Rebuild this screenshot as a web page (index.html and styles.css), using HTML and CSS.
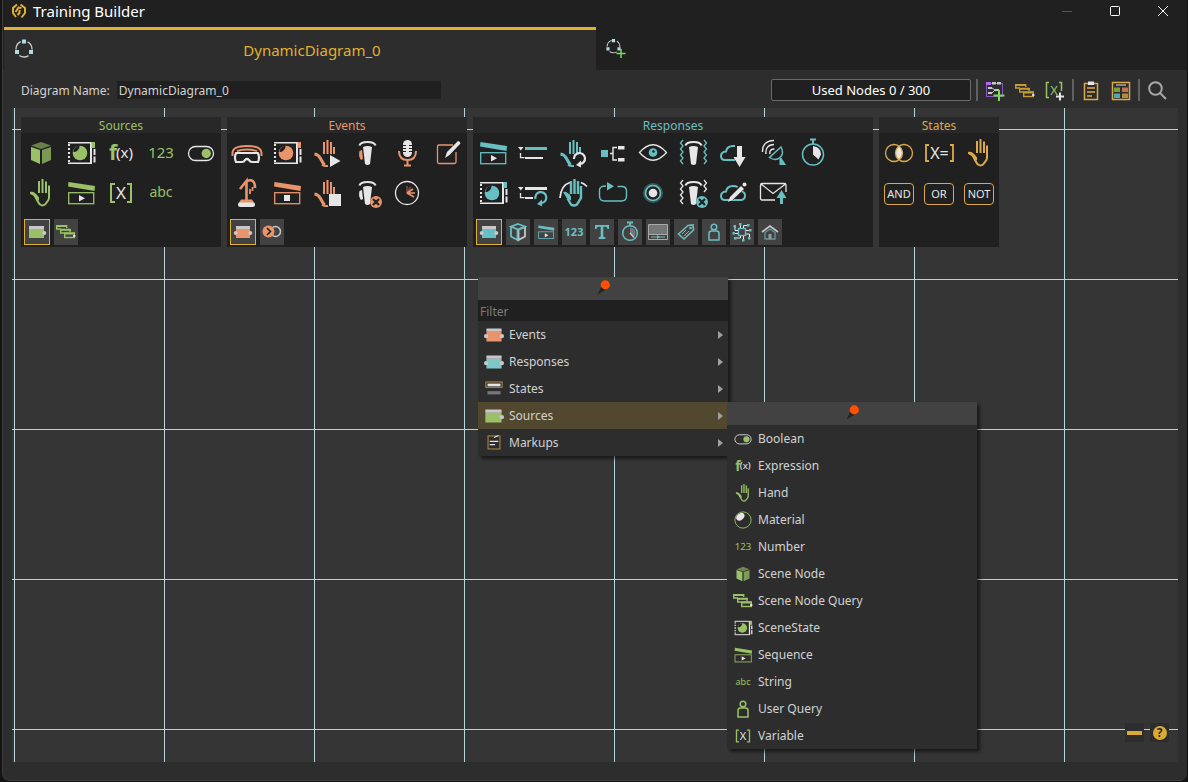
FILE: index.html
```html
<!DOCTYPE html>
<html lang="en">
<head>
  <meta charset="UTF-8">
  <meta name="viewport" content="width=device-width, initial-scale=1.0">
  <title>Training Builder</title>
  <link rel="stylesheet" href="styles.css">
</head>
<body>
  <!-- Icon sprite: currentColor is the group colour, .w / .ws are the light parts -->
  <svg class="sprite" aria-hidden="true">
    <symbol id="cube" viewBox="0 0 40 40">
      <path class="f" opacity=".6" d="M20 9l10 3.500-10 3.500-10-3.500z"/>
      <path class="f" d="M10 14l9 3v14l-9-4z"/>
      <path class="f" opacity=".75" d="M30 14l-9 3v14l9-4z"/>
    </symbol>
    <symbol id="scene" viewBox="0 0 40 40">
      <path class="ws" stroke-width="1.500" d="M7 9.700h22M7 30.300h22"/>
      <path class="ws" stroke-width="2" stroke-dasharray="2 2" d="M8 11v19"/>
      <path class="ws" stroke-width="2" d="M30 9v22"/>
      <path class="ws" stroke-width="2" stroke-dasharray="6 1.500" d="M33.500 16v15"/>
      <path class="f" d="M30.500 9H34v6h-3.500z"/>
      <circle class="f" cx="19" cy="20" r="7.300"/>
      <path class="dark" d="M12.500 19c0-3.500 2.500-6 6-6.300.3 3-2.500 6.500-6 6.300z"/>
    </symbol>
    <symbol id="fx" viewBox="0 0 40 40">
      <text class="f bold" x="8" y="27" font-size="21">f</text>
      <text class="w" x="15" y="25" font-size="15">(x)</text>
    </symbol>
    <symbol id="num" viewBox="0 0 40 40">
      <text class="f" x="20" y="25" font-size="15" text-anchor="middle">123</text>
    </symbol>
    <symbol id="toggle" viewBox="0 0 40 40">
      <rect class="ws" stroke-width="1.300" x="7.500" y="13.500" width="25" height="14" rx="7"/>
      <circle class="f" cx="25.300" cy="20.500" r="4.700"/>
    </symbol>
    <symbol id="hand" viewBox="0 0 40 40">
      <path class="s" stroke-width="2" d="M18 8v12M21.500 6v14M25 8.500V20M28 12.500V25q0 2-2 4l-2 2.500q-2.500 1.800-5 0c-2-2-3.500-5.500-5-8.500-1-1.500-2.500-2-4.500-3"/>
      <path class="f" d="M9 19c3-1 6 1 9 5.500v3l-3-1c-1-2.500-3-5.500-6-6z"/>
    </symbol>
    <symbol id="fingers" viewBox="0 0 40 40">
      <path class="s" stroke-width="2" d="M17 9v12M20.500 7v14M24 9v12M27 14v7"/>
      <path class="s" stroke-width="3" d="M7.500 21q4 .5 6 4.500t4 6.500"/>
      <path class="s" stroke-width="2" d="M15 31.500q2 2 6 1.500"/>
    </symbol>
    <symbol id="clap" viewBox="0 0 40 40">
      <path class="f" d="M7.500 9L34 13l-.500 5L7 13.500z"/>
      <rect class="s" stroke-width="1.300" x="7.700" y="19.700" width="25" height="11"/>
    </symbol>
    <symbol id="sequence" viewBox="0 0 40 40">
      <use href="#clap"/>
      <path class="w" d="M18 22l6 3.300-6 3.300z"/>
    </symbol>
    <symbol id="seqstop" viewBox="0 0 40 40">
      <use href="#clap"/>
      <path class="w" d="M17 22h6v6h-6z"/>
    </symbol>
    <symbol id="variable" viewBox="0 0 40 40">
      <path class="s" stroke-width="2" d="M14 11h-4v18h4M26 11h4v18h-4"/>
      <text class="w" x="20" y="26" font-size="17" text-anchor="middle">X</text>
    </symbol>
    <symbol id="abc" viewBox="0 0 40 40">
      <text class="f" x="20" y="24" font-size="14" text-anchor="middle">abc</text>
    </symbol>
    <symbol id="stack" viewBox="0 0 24 24">
      <path class="s" stroke-width="1.400" d="M7 9H2.700V5.700h10V8M10 13H6.700V9.500H16V12"/>
      <path class="f" d="M2 5h11v2H2zM6 9h11v1.800H6zM10 12.500h11v2H10z"/>
      <rect class="s" stroke-width="1.400" x="10.700" y="13" width="9.600" height="4.500"/>
      <circle class="w" cx="20.300" cy="16" r="1.200"/>
    </symbol>
    <symbol id="node-out" viewBox="0 0 24 24">
      <path class="f" d="M4 9h15v9H4z"/>
      <path class="g" d="M4 6h15v3H4z"/>
      <circle class="g" cx="19.300" cy="13" r="2"/>
    </symbol>
    <symbol id="node" viewBox="0 0 24 24">
      <path class="f" d="M5 9h14v9H5z"/>
      <path class="g" d="M5 6h14v3H5z"/>
      <circle class="g" cx="19.300" cy="13" r="2"/>
      <circle class="g" cx="4.700" cy="13" r="2"/>
    </symbol>

    <symbol id="vr" viewBox="0 0 40 40">
      <path class="s" stroke-width="2" d="M5.500 23v-3q0-7 14.500-7t14.500 7v3M10 18q10-3 20 0"/>
      <path class="ws" stroke-width="2.200" stroke-linejoin="round" d="M9 20h22q2 5 0 9h-6q-2 0-3-2-2-2-4 0-1 2-3 2H9q-2-4 0-9z"/>
    </symbol>
    <symbol id="handplay" viewBox="0 0 40 40">
      <use href="#fingers"/>
      <path class="w" d="M23 22l10.500 6L23 34z"/>
    </symbol>
    <symbol id="handstop" viewBox="0 0 40 40">
      <use href="#fingers"/>
      <path class="w" d="M22 21h12v12H22z"/>
    </symbol>
    <symbol id="wand" viewBox="0 0 40 40">
      <path class="ws" stroke-width="2.200" d="M12.500 12.500q1-3.500 8-3.500t8 3.500"/>
      <path class="w" d="M16 14q4.500-2 9 0l-2 17q-2.500 2-5 0z"/>
    </symbol>
    <symbol id="grab" viewBox="0 0 40 40">
      <use href="#wand"/>
      <path class="f" d="M12.500 18l2.500-1 1 9-2 1q-3-4-1.500-9z"/>
    </symbol>
    <symbol id="cross" viewBox="0 0 40 40">
      <circle class="f" cx="29" cy="29" r="6"/>
      <path class="ds" stroke-width="2.200" d="M26 26l6 6M32 26l-6 6"/>
    </symbol>
    <symbol id="grabx" viewBox="0 0 40 40">
      <use href="#wand"/>
      <path class="w" d="M12.500 18l2.500-1 1 9-2 1q-3-4-1.500-9z"/>
      <use href="#cross"/>
    </symbol>
    <symbol id="mic" viewBox="0 0 40 40">
      <rect class="w" x="16" y="7" width="9" height="17" rx="4.500"/>
      <path class="ds" stroke-width="1" d="M15 12.500h4M15 15.500h4M15 18.500h4M26 12.500h-4M26 15.500h-4M26 18.500h-4"/>
      <path class="s" stroke-width="2" d="M12 18q0 9 8.500 9T29 18M20.500 27v5M17 32.500h7"/>
    </symbol>
    <symbol id="edit" viewBox="0 0 40 40">
      <path class="s" stroke-width="1.300" d="M26 12H12q-1.500 0-1.500 1.500v15.500q0 1.500 1.500 1.500h15.500q1.500 0 1.500-1.500V19"/>
      <path class="w" d="M18 25l2-6L31 8q2 0 2.500 2.500L22.500 22z"/>
    </symbol>
    <symbol id="touch" viewBox="0 0 40 40">
      <path class="s" stroke-width="2.600" d="M19.500 27V8L13 16M20 8q8-3 8 7"/>
      <path class="s" stroke-width="1.800" d="M23 16v5M25.500 14v4"/>
      <rect class="w" x="11" y="29" width="17" height="5" rx="2.500"/>
      <path class="f" d="M14 26.500h11l2 3H12z"/>
    </symbol>
    <symbol id="gauge" viewBox="0 0 40 40">
      <circle class="ws" stroke-width="1.300" cx="20" cy="20" r="11.500"/>
      <path class="s" stroke-width="1.600" d="M20 20h8M20 20l7 4M20 20l6-4"/>
      <path class="s" opacity=".4" stroke-width="1.600" d="M20 20v-7M20 20l3.500-6"/>
    </symbol>
    <symbol id="shift" viewBox="0 0 24 24">
      <circle class="gs" stroke-width="1.500" cx="15.500" cy="11.500" r="5"/>
      <circle class="f" cx="8.500" cy="11.500" r="6"/>
      <path class="ds" stroke-width="1.600" d="M7 8l3.500 3.500L7 15"/>
    </symbol>

    <symbol id="list" viewBox="0 0 40 40">
      <path class="w" d="M5 14h5.500l-2.700 3.500z"/>
      <path class="ws" stroke-width="1.300" d="M7.500 20v4.700h4"/>
      <path class="f" d="M12 14h22v3H12z"/>
      <path class="w" d="M12 24h18v2H12z"/>
    </symbol>
    <symbol id="listredo" viewBox="0 0 40 40">
      <path class="w" d="M5 14h5.500l-2.700 3.500zM12 14h22v3H12zM12 24h8v2h-8z"/>
      <path class="ws" stroke-width="1.300" d="M7.500 20v4.700h4"/>
      <path class="s" stroke-width="2.200" d="M22.500 26a5.500 5.500 0 1 1 6 4"/>
      <path class="f" d="M29 26.500v7l-5-2.500z"/>
    </symbol>
    <symbol id="handredo" viewBox="0 0 40 40">
      <use href="#fingers"/>
      <path class="ws" stroke-width="2.200" d="M21 26a5.500 5.500 0 1 1 6 5"/>
      <path class="w" d="M28 27.500v7L23 32z"/>
    </symbol>
    <symbol id="tree" viewBox="0 0 40 40">
      <path class="f" d="M8 17h7v7H8z"/>
      <path class="ws" stroke-width="1.400" d="M17 20.500h3M24 14.500h-4v12.500h4"/>
      <path class="w" d="M25 13h6.500v3.500H25zM25 25h6.500v3.500H25z"/>
    </symbol>
    <symbol id="eye" viewBox="0 0 40 40">
      <path class="ws" stroke-width="1.300" d="M6.500 19.500Q20 4 33.500 19.500 20 35 6.500 19.500z"/>
      <circle class="f" cx="20" cy="19.500" r="4.300"/>
      <circle class="dark" cx="20.500" cy="18.500" r="1.300"/>
    </symbol>
    <symbol id="haptic" viewBox="0 0 40 40">
      <use href="#wand"/>
      <path class="s" stroke-width="1.300" d="M10 7l-2.500 3 2.500 3-2.500 3 2.500 3-2.500 3 2.500 3-2.500 3 2.500 3M31 7l2.500 3-2.500 3 2.500 3-2.500 3 2.500 3-2.500 3 2.500 3-2.500 3"/>
    </symbol>
    <symbol id="hapticx" viewBox="0 0 40 40">
      <use href="#wand"/>
      <path class="ws" stroke-width="1.300" d="M10 7l-2.500 3 2.500 3-2.500 3 2.500 3-2.500 3 2.500 3-2.500 3 2.500 3M31 7l2.500 3-2.500 3 2.500 3-2.500 3"/>
      <use href="#cross"/>
    </symbol>
    <symbol id="cloud" viewBox="0 0 40 40">
      <path class="s" stroke-width="2" d="M12 27q-4 0-4-4t5-4.500q1-5.500 7-5.500t7 5q5 .5 5 4.500t-4 4.500z"/>
    </symbol>
    <symbol id="cloudload" viewBox="0 0 40 40">
      <path class="s" stroke-width="2" d="M22 27H12q-4 0-4-4t5-4.500q1-5.500 7-5.500h2"/>
      <path class="w" d="M24 13h5v11h3.500L26.500 34l-6-10H24z"/>
    </symbol>
    <symbol id="cloudedit" viewBox="0 0 40 40">
      <use href="#cloud"/>
      <path class="ds" stroke-width="6" d="M18 25L31 12"/>
      <path class="w" d="M15 29l2-5L28 13l3 3-11 10.500z"/>
      <circle class="w" cx="31.500" cy="11.500" r="2"/>
    </symbol>
    <symbol id="dish" viewBox="0 0 40 40">
      <path class="ws" stroke-width="1.400" d="M9.500 19Q9 8 21 7.500M13 21q-1-9 8-9.500M17 21q-1-5 4.500-5"/>
      <path class="s" stroke-width="1.500" d="M28 14L16.500 24.500q6 4 10.500 0t1-10.500z"/>
      <path class="f" d="M26.500 25h2L33 32h-6.500z"/>
    </symbol>
    <symbol id="timer" viewBox="0 0 40 40">
      <circle class="s" stroke-width="1.500" cx="20" cy="21.500" r="10.500"/>
      <path class="s" stroke-width="2" d="M17 6.500h6M20 6.500V11"/>
      <path class="w" d="M20 13q8 1 8 8.500l-2.500 5L20 21.500z"/>
    </symbol>
    <symbol id="timer-s" viewBox="0 0 24 24">
      <circle class="s" stroke-width="1.500" cx="12" cy="13" r="7.300"/>
      <path class="s" stroke-width="1.800" d="M9 2.500h6M12 2.500V6"/>
      <path fill="#777" d="M12 7.500q5.500.500 5.500 6L16 17l-4-4z"/>
      <path class="gs" stroke-width="1.500" d="M12 13l4 4.500"/>
    </symbol>
    <symbol id="handarc" viewBox="0 0 40 40">
      <path class="ws" stroke-width="1.700" d="M7 25Q8 12 17 9.500M28 9.500q3 1 6 4"/>
      <path class="s" stroke-width="2.400" d="M18 8v13M21.500 6v15M25 8v13M28 13v12l-4 6.500q-3 2-6 0l-3.500-6"/>
      <path class="f" d="M10 19q4-1 8 4.500v4l-4-2z"/>
    </symbol>
    <symbol id="loop" viewBox="0 0 40 40">
      <path class="s" stroke-width="1.400" d="M13 13q-6.500 0-6.500 4v6q0 5 5 5h17q5 0 5-5v-5q0-4-4-4.500h-5"/>
      <path class="f" d="M14 9l7 4.300-7 4.200z"/>
    </symbol>
    <symbol id="target" viewBox="0 0 40 40">
      <circle class="f" opacity=".35" cx="20" cy="20" r="10"/>
      <circle class="dark" cx="20" cy="20" r="6.800"/>
      <circle class="s" stroke-width="1.600" cx="20" cy="20" r="7.500"/>
      <circle class="w" cx="20" cy="20" r="4.300"/>
    </symbol>
    <symbol id="mail" viewBox="0 0 40 40">
      <path class="ws" stroke-width="1.300" d="M22 27H9q-1.500 0-1.500-1.500V12q0-1.500 1.500-1.500h22.500q1.500 0 1.500 1.500v7M8 11l12 9.500L32.500 11"/>
      <path class="f" d="M28.500 17l5 8h-3.500v6h-3v-6h-3.500z"/>
    </symbol>

    <symbol id="box" viewBox="0 0 24 24">
      <path class="gs" stroke-width="1.800" d="M12.500 9.500L19 7v9.500l-6.500 3.500z"/>
      <path class="s" stroke-width="1.800" d="M12 4l7 2.500-7 3-7-3zM5 7v9.500l6.500 3.500V9.500"/>
    </symbol>
    <symbol id="num-s" viewBox="0 0 24 24">
      <text class="f bold" x="12" y="16" font-size="11" text-anchor="middle">123</text>
    </symbol>
    <symbol id="type" viewBox="0 0 24 24">
      <path class="f" d="M5 5h14v4h-1.500q0-2.300-2.500-2.300h-1.700v9.600q0 1 2 1V19H8.700v-1.700q2 0 2-1V6.700H9Q6.500 6.700 6.500 9H5z"/>
    </symbol>
    <symbol id="panel" viewBox="0 0 24 24">
      <path fill="#777" stroke="#aaa" d="M2.500 4.500h19v10h-19z"/>
      <path stroke="#aaa" d="M2.500 14.500h19v5h-19z"/>
      <path class="s" stroke-width="1" d="M5 17h14"/>
      <path class="f" d="M11 15l3 2-3 2z"/>
    </symbol>
    <symbol id="tag" viewBox="0 0 24 24">
      <path class="s" stroke-width="1.600" d="M4.500 14L14 5.500l5-.500.500 5L10 19z"/>
      <path class="s" stroke-width="1" d="M8 14l4-4M10 16l5-5"/>
      <circle class="f" cx="16.500" cy="8" r="1.300"/>
    </symbol>
    <symbol id="person" viewBox="0 0 24 24">
      <circle class="s" stroke-width="1.500" cx="12" cy="7" r="2.800"/>
      <path class="s" stroke-width="1.500" d="M7 20v-6.500q0-2.500 2.500-2.500h5q2.500 0 2.500 2.500V20z"/>
    </symbol>
    <symbol id="chip" viewBox="0 0 24 24">
      <rect class="s" stroke-width="1.400" x="8.500" y="8.500" width="7" height="7"/>
      <path class="ws" stroke-width="1" d="M10.500 8V4M13.500 8V5.500H18M16 10.500h4M16 14h3.500v3M13.500 16v4M10.500 16v2H6M8 13.500H4M8 10.500H5V7"/>
      <path class="f" d="M9 3h2.500v2.500H9zM17 4h2.500v2.500H17zM19 9h2.500v2.500H19zM18 17h2.500v2.500H18zM12 19h2.500v2.500H12zM4 17h2.500v2.500H4zM2.500 12H5v2.500H2.500zM3.500 5H6v2.500H3.500z"/>
    </symbol>
    <symbol id="home" viewBox="0 0 24 24">
      <path class="gs" stroke-width="1.600" d="M4 12l8-6 8 6"/>
      <path class="s" opacity=".7" stroke-width="1.300" d="M7 12.500V19h10v-6.500L12 9z"/>
      <path fill="#999" d="M10.500 14h3v5h-3z"/>
    </symbol>

    <symbol id="venn" viewBox="0 0 40 40">
      <path class="w" d="M20 13q7 7 0 14-7-7 0-14z"/>
      <circle class="s" stroke-width="1.300" cx="15" cy="20" r="8.500"/>
      <circle class="s" stroke-width="1.300" cx="25" cy="20" r="8.500"/>
    </symbol>
    <symbol id="xeq" viewBox="0 0 40 40">
      <path class="s" stroke-width="1.800" d="M10 12H7v16h3M31 12h3v16h-3"/>
      <text class="w" x="20.500" y="26" font-size="16" text-anchor="middle">X=</text>
    </symbol>

    <symbol id="state" viewBox="0 0 24 24">
      <rect x="4.500" y="5.500" width="15" height="5" fill="none" stroke="#a9843c"/>
      <path class="w" d="M6 7h12v2.500H6z"/>
      <path fill="#777" d="M6 14h12v3H6z"/>
    </symbol>
    <symbol id="markup" viewBox="0 0 24 24">
      <rect x="6.500" y="5.500" width="11" height="12" fill="none" stroke="#a9843c"/>
      <path class="ws" stroke-width="1" d="M8 10.500h8M8 13.500h5M12 7l4-2"/>
    </symbol>
    <symbol id="ball" viewBox="0 0 40 40">
      <circle class="s" stroke-width="1.400" cx="20" cy="20" r="12.500"/>
      <ellipse class="w" cx="16" cy="15" rx="7" ry="5" transform="rotate(-40 16 15)"/>
    </symbol>
    <symbol id="pin" viewBox="0 0 24 24">
      <path fill="#222" d="M6 18l5-10 5 4z"/>
      <circle cx="14.500" cy="7.500" r="5" fill="#ff4f00"/>
    </symbol>
    <symbol id="ring" viewBox="0 0 24 24">
      <circle cx="12" cy="12" r="8" stroke="#c8c8c8" stroke-width="1.300" stroke-dasharray="9.750 7" stroke-dashoffset="-7.700"/>
      <path fill="#b5dbe2" d="M10 2.500h4v4h-4zM3 13h4v4H3zM17 13h4v4h-4z"/>
    </symbol>
  </svg>

  <div class="window">
    <header class="titlebar">
      <svg class="logo" viewBox="0 0 16 16" aria-hidden="true">
        <path d="M6 1.500L2 5v5l3 4M9.500 1.500L14 5v5l-3.500 4.500M4.500 9l3-4.500 3 .500M8.500 7v3l-2 2"/>
      </svg>
      <h1>Training Builder</h1>
      <div class="win-buttons">
        <button aria-label="Minimize" disabled><svg viewBox="0 0 12 12"><path d="M1 6.500h10"/></svg></button>
        <button aria-label="Maximize"><svg viewBox="0 0 12 12"><rect x="1.500" y="1.500" width="9" height="9" rx="1"/></svg></button>
        <button aria-label="Close"><svg viewBox="0 0 12 12"><path d="M1 1l10 10M11 1L1 11"/></svg></button>
      </div>
    </header>

    <nav class="tabs">
      <button class="tab">
        <svg><use href="#ring"/></svg>
        <span>DynamicDiagram_0</span>
      </button>
      <button class="tab-add" aria-label="Add diagram">
        <svg viewBox="0 0 24 24">
          <use href="#ring" width="19" height="19"/>
          <path stroke="#7ed957" stroke-width="1.500" d="M17 12v9M12.500 16.500h9"/>
        </svg>
      </button>
    </nav>

    <div class="toolbar">
      <label for="name">Diagram Name:</label>
      <input type="text" id="name" value="DynamicDiagram_0">
      <div class="used">Used Nodes 0 / 300</div>
      <div class="actions">
        <button aria-label="Add group">
          <svg viewBox="0 0 24 24">
            <rect x="3.500" y="4.500" width="16" height="13" fill="none" stroke="#8d55c7"/>
            <path fill="#b06cf0" d="M3 3h5v3H3z"/>
            <path fill="#c8c8c8" d="M9 3h4v2.500H9zM14 3h4v2.500h-4zM5 8h4v2H5zM5 13h4v2H5zM12 10h4v2h-4z"/>
            <path stroke="#c8c8c8" d="M9 9l3 2-3 3"/>
            <path stroke="#7ed957" stroke-width="2" d="M16 11v11M10.500 16.500h11"/>
          </svg>
        </button>
        <button class="gold" aria-label="Node query"><svg><use href="#stack"/></svg></button>
        <button class="green" aria-label="Add variable">
          <svg viewBox="0 0 24 24">
            <path class="s" stroke-width="1.500" d="M6 3.500H3.500v15H6M16 3.500h2.500V12"/>
            <text class="f" x="11" y="16" font-size="13" text-anchor="middle">X</text>
            <path class="ws" stroke-width="2" d="M17 13.500v8M13 17.500h8"/>
          </svg>
        </button>
      </div>
      <div class="actions">
        <button class="states" aria-label="Clipboard">
          <svg viewBox="0 0 24 24">
            <rect class="s" stroke-width="1.500" x="5.500" y="4.500" width="13" height="16"/>
            <path class="s" stroke-width="1.500" d="M8 9h8M8 13h8M8 17h5"/>
            <path class="w" d="M9 2.500h6V6H9z"/>
          </svg>
        </button>
        <button class="states" aria-label="Palette">
          <svg viewBox="0 0 24 24">
            <rect class="s" stroke-width="1.500" x="3.500" y="3.500" width="17" height="17"/>
            <path class="ws" d="M7 6h10"/>
            <path fill="#7f9d3c" d="M5 8.500h6V13H5z"/>
            <path fill="#c5714e" d="M13 8.500h6V13h-6z"/>
            <path fill="#4fa9ac" d="M5 14.500h6V19H5z"/>
            <path fill="#b78a34" d="M13 14.500h6V19h-6z"/>
          </svg>
        </button>
      </div>
      <div class="actions">
        <button aria-label="Search">
          <svg viewBox="0 0 24 24"><circle class="find" cx="10.500" cy="9.500" r="6.300"/><path class="find" d="M15 14l6 6"/></svg>
        </button>
      </div>
    </div>

    <main class="canvas">
      <div class="palettes">
        <section class="palette sources">
          <h2>Sources</h2>
          <div class="tools cols-5">
            <button aria-label="Scene node"><svg><use href="#cube"/></svg></button>
            <button aria-label="Scene state"><svg><use href="#scene"/></svg></button>
            <button aria-label="Expression"><svg><use href="#fx"/></svg></button>
            <button aria-label="Number"><svg><use href="#num"/></svg></button>
            <button aria-label="Boolean"><svg><use href="#toggle"/></svg></button>
            <button aria-label="Hand"><svg><use href="#hand"/></svg></button>
            <button aria-label="Sequence"><svg><use href="#sequence"/></svg></button>
            <button aria-label="Variable"><svg><use href="#variable"/></svg></button>
            <button aria-label="String"><svg><use href="#abc"/></svg></button>
          </div>
          <div class="filters">
            <button class="active" aria-label="All"><svg><use href="#node-out"/></svg></button>
            <button aria-label="Query"><svg><use href="#stack"/></svg></button>
          </div>
        </section>

        <section class="palette events">
          <h2>Events</h2>
          <div class="tools cols-6">
            <button aria-label="Headset"><svg><use href="#vr"/></svg></button>
            <button aria-label="Scene state"><svg><use href="#scene"/></svg></button>
            <button aria-label="Hand start"><svg><use href="#handplay"/></svg></button>
            <button aria-label="Grab"><svg><use href="#grab"/></svg></button>
            <button aria-label="Voice"><svg><use href="#mic"/></svg></button>
            <button aria-label="Edit"><svg><use href="#edit"/></svg></button>
            <button aria-label="Touch"><svg><use href="#touch"/></svg></button>
            <button aria-label="Sequence stop"><svg><use href="#seqstop"/></svg></button>
            <button aria-label="Hand stop"><svg><use href="#handstop"/></svg></button>
            <button aria-label="Release"><svg><use href="#grabx"/></svg></button>
            <button aria-label="Gauge"><svg><use href="#gauge"/></svg></button>
          </div>
          <div class="filters">
            <button class="active" aria-label="All"><svg><use href="#node"/></svg></button>
            <button aria-label="Transitions"><svg><use href="#shift"/></svg></button>
          </div>
        </section>

        <section class="palette responses">
          <h2>Responses</h2>
          <div class="tools cols-9">
            <button aria-label="Play sequence"><svg><use href="#sequence"/></svg></button>
            <button aria-label="List"><svg><use href="#list"/></svg></button>
            <button aria-label="Hand reset"><svg><use href="#handredo"/></svg></button>
            <button aria-label="Hierarchy"><svg><use href="#tree"/></svg></button>
            <button aria-label="Visibility"><svg><use href="#eye"/></svg></button>
            <button aria-label="Haptics"><svg><use href="#haptic"/></svg></button>
            <button aria-label="Cloud load"><svg><use href="#cloudload"/></svg></button>
            <button aria-label="Broadcast"><svg><use href="#dish"/></svg></button>
            <button aria-label="Timer"><svg><use href="#timer"/></svg></button>
            <button aria-label="Scene state"><svg><use href="#scene"/></svg></button>
            <button aria-label="List reset"><svg><use href="#listredo"/></svg></button>
            <button aria-label="Hand range"><svg><use href="#handarc"/></svg></button>
            <button aria-label="Loop"><svg><use href="#loop"/></svg></button>
            <button aria-label="Highlight"><svg><use href="#target"/></svg></button>
            <button aria-label="Stop haptics"><svg><use href="#hapticx"/></svg></button>
            <button aria-label="Cloud edit"><svg><use href="#cloudedit"/></svg></button>
            <button aria-label="Send mail"><svg><use href="#mail"/></svg></button>
          </div>
          <div class="filters">
            <button class="active" aria-label="All"><svg><use href="#node"/></svg></button>
            <button aria-label="Object"><svg><use href="#box"/></svg></button>
            <button aria-label="Sequence"><svg><use href="#sequence"/></svg></button>
            <button aria-label="Number"><svg><use href="#num-s"/></svg></button>
            <button aria-label="Text"><svg><use href="#type"/></svg></button>
            <button aria-label="Timer"><svg><use href="#timer-s"/></svg></button>
            <button aria-label="Panel"><svg><use href="#panel"/></svg></button>
            <button aria-label="Tag"><svg><use href="#tag"/></svg></button>
            <button aria-label="User"><svg><use href="#person"/></svg></button>
            <button aria-label="Device"><svg><use href="#chip"/></svg></button>
            <button aria-label="Home"><svg><use href="#home"/></svg></button>
          </div>
        </section>

        <section class="palette states">
          <h2>States</h2>
          <div class="tools cols-3">
            <button aria-label="Intersection"><svg><use href="#venn"/></svg></button>
            <button aria-label="Compare"><svg><use href="#xeq"/></svg></button>
            <button aria-label="Hand"><svg><use href="#hand"/></svg></button>
            <button><span class="gate">AND</span></button>
            <button><span class="gate">OR</span></button>
            <button><span class="gate">NOT</span></button>
          </div>
        </section>
      </div>

      <div class="menu">
        <div class="menu-head"><svg><use href="#pin"/></svg></div>
        <input type="text" class="filter" placeholder="Filter" aria-label="Filter">
        <ul>
          <li><button class="events more"><svg><use href="#node"/></svg>Events</button></li>
          <li><button class="responses more"><svg><use href="#node"/></svg>Responses</button></li>
          <li><button class="states more"><svg><use href="#state"/></svg>States</button></li>
          <li><button class="sources more open"><svg><use href="#node-out"/></svg>Sources</button></li>
          <li><button class="states more"><svg><use href="#markup"/></svg>Markups</button></li>
        </ul>

        <div class="menu submenu">
          <div class="menu-head"><svg><use href="#pin"/></svg></div>
          <ul>
            <li><button><svg><use href="#toggle"/></svg>Boolean</button></li>
            <li><button><svg><use href="#fx"/></svg>Expression</button></li>
            <li><button><svg><use href="#hand"/></svg>Hand</button></li>
            <li><button><svg><use href="#ball"/></svg>Material</button></li>
            <li><button><svg><use href="#num"/></svg>Number</button></li>
            <li><button><svg><use href="#cube"/></svg>Scene Node</button></li>
            <li><button><svg class="small"><use href="#stack"/></svg>Scene Node Query</button></li>
            <li><button><svg><use href="#scene"/></svg>SceneState</button></li>
            <li><button><svg><use href="#sequence"/></svg>Sequence</button></li>
            <li><button><svg><use href="#abc"/></svg>String</button></li>
            <li><button><svg class="small"><use href="#person"/></svg>User Query</button></li>
            <li><button><svg><use href="#variable"/></svg>Variable</button></li>
          </ul>
        </div>
      </div>

      <div class="corner">
        <button aria-label="Collapse"><i class="bar"></i></button>
        <button aria-label="Help"><b>?</b></button>
      </div>
    </main>
  </div>
</body>
</html>
```
FILE: styles.css
```css
* {
  box-sizing: border-box;
}
body {
  margin: 0;
  background: #141414;
  color: #d2d2d2;
  font: 12px/18px "Noto Sans", "Open Sans", sans-serif;
}
button,
input {
  font: inherit;
  color: inherit;
  border: 0;
  padding: 0;
  background: none;
}
h1,
h2,
ul {
  margin: 0;
  padding: 0;
  font-weight: normal;
  list-style: none;
}
svg {
  display: block;
  flex: none;
  fill: none;
}
.sprite {
  display: none;
}

/* icon paint */
.f { fill: currentColor; }
.s { stroke: currentColor; fill: none; }
.w { fill: #e6e6e6; }
.ws { stroke: #e6e6e6; fill: none; }
.g { fill: #c8c8c8; }
.gs { stroke: #c8c8c8; fill: none; }
.dark { fill: #202020; }
.ds { stroke: #202020; fill: none; }
.bold { font-weight: bold; }

.sources { color: #9ac167; }
.events { color: #e9946b; }
.responses { color: #68bfc2; }
.states { color: #dcaa4a; }
.green { color: #9ac167; }
.gold { color: #c79a2e; }

.window {
  display: flex;
  flex-direction: column;
  height: calc(100vh - 1px);
  margin: 0 1px 0 2px;
  padding-bottom: 18px;
  background: #2d2d2d;
  border: 1px solid #3c3c3c;
  border-width: 0 0 1px 1px;
  border-radius: 0 0 8px 8px;
}

.titlebar {
  display: flex;
  align-items: center;
  height: 27px;
  padding: 0 0 5px 8px;
  background: #202020;
}
.logo {
  width: 16px;
  height: 16px;
  margin-right: 6px;
  stroke: #e0b030;
  stroke-width: 2;
}
h1 {
  flex: 1;
  color: #fff;
  font-size: 15px;
  line-height: 20px;
}
.win-buttons {
  display: flex;
}
.win-buttons button {
  width: 48px;
  height: 22px;
  display: grid;
  place-items: center;
}
.win-buttons svg {
  width: 12px;
  height: 12px;
  stroke: #fff;
}
.win-buttons button:disabled svg {
  stroke: #555;
}

.tabs {
  display: flex;
  background: #202020;
}
.tab {
  position: relative;
  flex: 0 0 50%;
  height: 43px;
  margin-left: 1px;
  background: #2d2d2d;
  border-top: 3px solid #e0b030;
  color: #e0b030;
  font-size: 15px;
  line-height: 20px;
}
.tab span {
  margin-left: 24px;
}
.tab svg {
  position: absolute;
  left: 8px;
  top: 7px;
  width: 24px;
  height: 24px;
}
.tab-add {
  padding: 0 8px;
}
.tab-add svg {
  width: 24px;
  height: 24px;
}

.toolbar {
  display: flex;
  align-items: center;
  height: 38px;
  padding: 2px 15px 0 18px;
}
.toolbar label {
  padding-top: 2px;
}
#name {
  flex: 0 1 324px;
  min-width: 0;
  height: 18px;
  margin-left: 7px;
  padding: 1px 2px 0;
  background: #202020;
}
.used {
  flex: 0 0 200px;
  height: 22px;
  margin-left: auto;
  margin-right: 3px;
  border: 1px solid #6a6a6a;
  border-radius: 2px;
  background: #202020;
  color: #fff;
  font-size: 13px;
  line-height: 20px;
  text-align: center;
}
.actions {
  display: flex;
  margin-left: 2px;
  padding-left: 2px;
  border-left: 2px solid #606060;
}
.actions button {
  width: 30px;
  height: 22px;
  display: grid;
  place-items: center;
}
.actions svg {
  width: 24px;
  height: 24px;
}
.find {
  stroke: #a8a8a8;
  stroke-width: 2;
}

.canvas {
  position: relative;
  flex: 1;
  margin: 0 9px;
  overflow: hidden;
  background-color: #353535;
  background-image: linear-gradient(#b5d5dc 1px, transparent 1px), linear-gradient(90deg, #b5d5dc 1px, transparent 1px);
  background-size: 150px 150px;
  background-position: 2px 21px;
}
.palettes {
  display: flex;
  gap: 6px;
  padding: 9px;
}
.palette {
  display: flex;
  flex-direction: column;
  height: 130px;
  background: #202020;
}
.palette h2 {
  height: 16px;
  background: #282828;
  font-size: 12px;
  line-height: 18px;
  text-align: center;
}
.tools {
  display: grid;
  grid-auto-rows: 40px;
}
.cols-3 { grid-template-columns: repeat(3, 40px); }
.cols-5 { grid-template-columns: repeat(5, 40px); }
.cols-6 { grid-template-columns: repeat(6, 40px); }
.cols-9 { grid-template-columns: repeat(9, 40px); padding-right: 40px; }
.tools svg {
  width: 40px;
  height: 40px;
}
.gate {
  display: block;
  margin: 2px 5px 0;
  border: 1px solid #dcaa4a;
  border-radius: 4px;
  color: #e6e6e6;
  font-size: 11px;
  line-height: 20px;
}
.filters {
  display: flex;
  gap: 4px;
  padding: 6px 3px 0;
}
.filters button {
  height: 26px;
  background: #424242;
}
.filters .active {
  border: 1px solid #e0b030;
}
.filters svg {
  width: 24px;
  height: 24px;
}

.menu {
  position: absolute;
  left: 466px;
  top: 169px;
  width: 250px;
  background: #2d2d2d;
  box-shadow: 3px 3px 3px rgba(0, 0, 0, 0.5);
}
.submenu {
  left: 249px;
  top: 125px;
}
.menu-head {
  display: grid;
  place-items: center;
  height: 23px;
  background: #424242;
}
.menu-head svg {
  width: 22px;
  height: 22px;
}
.filter {
  display: block;
  width: 100%;
  height: 21px;
  padding: 2px 2px 0;
  background: #202020;
}
.filter::placeholder {
  color: #7c7c7c;
}
.menu li button {
  display: flex;
  align-items: center;
  width: 100%;
  height: 27px;
  padding: 1px 0 0 3px;
  color: #d2d2d2;
  text-align: left;
}
.menu li svg {
  width: 26px;
  height: 26px;
  margin-right: 2px;
  color: #9ac167;
}
.menu li svg.small {
  width: 24px;
  height: 24px;
  margin: 0 3px 0 1px;
}
.menu .events svg { color: #e9946b; }
.menu .responses svg { color: #7cc8c8; }
.more::after {
  content: "";
  margin-left: auto;
  margin-right: 5px;
  border: 4px solid transparent;
  border-left: 5px solid #a0a0a0;
  border-right: 0;
}
.menu .open {
  background: #52472f;
}

.corner {
  position: absolute;
  right: 9px;
  bottom: 20px;
  display: flex;
  gap: 6px;
}
.corner button {
  display: grid;
  place-items: center;
  width: 19px;
  height: 19px;
  background: #2d2d2d;
}
.bar {
  width: 15px;
  height: 4px;
  background: #dcaa33;
}
.corner b {
  width: 14px;
  height: 14px;
  border-radius: 50%;
  background: #dcaa33;
  color: #2d2d2d;
  font-size: 12px;
  line-height: 14px;
}
```
